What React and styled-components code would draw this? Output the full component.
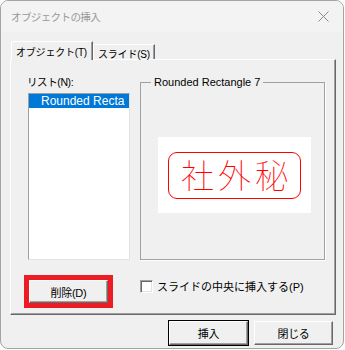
import React from "react";
import styled, { createGlobalStyle } from "styled-components";

const Global = createGlobalStyle`
  html, body {
    margin: 0;
    padding: 0;
    background: #ffffff;
  }
  body {
    font-family: "Liberation Sans", "Noto Sans CJK JP", sans-serif;
    font-size: 11px;
    color: #000;
  }
`;

const Window = styled.div`
  width: 344px;
  height: 349px;
  box-sizing: border-box;
  border: 1px solid #a4a4a4;
  border-radius: 8px;
  background: #f0f0f0;
  overflow: hidden;
  display: flex;
  flex-direction: column;
`;

const TitleBar = styled.div`
  height: 31px;
  flex: none;
  background: #f3f3f3;
  display: flex;
  align-items: center;
  justify-content: space-between;
  padding: 0 10px 0 10px;
  color: #9a9a9a;
  font-size: 10.5px;
  letter-spacing: -0.6px;
`;

const Close = styled.svg`
  width: 11px;
  height: 11px;
  margin-right: 4px;
`;

const Body = styled.div`
  padding: 9px 9px 0 9px;
  display: flex;
  flex-direction: column;
`;

const TabRow = styled.div`
  display: flex;
  align-items: flex-end;
  height: 18px;
  padding-left: 1px;
  position: relative;
  z-index: 1;
`;

const Tab = styled.div`
  box-sizing: border-box;
  height: ${(p) => (p.$active ? "19px" : "15px")};
  margin-bottom: ${(p) => (p.$active ? "-1px" : "0")};
  padding: ${(p) => (p.$active ? "2px 0 0 4px" : "1px 0 0 4px")};
  width: ${(p) => p.$w}px;
  background: #f0f0f0;
  border-top: 1px solid #ffffff;
  border-left: 1px solid #ffffff;
  border-right: 1px solid #696969;
  border-top-left-radius: 2px;
  box-shadow: inset -1px 0 #a0a0a0;
  white-space: nowrap;
  font-size: 10px;
  letter-spacing: -0.2px;
`;

const Panel = styled.div`
  box-sizing: border-box;
  height: 256px;
  width: 326px;
  border-top: 1px solid #ffffff;
  border-left: 1px solid #ffffff;
  border-right: 1px solid #696969;
  border-bottom: 1px solid #696969;
  box-shadow: inset -1px -1px #a0a0a0;
  padding: 16px 0 0 16px;
  display: flex;
  flex-direction: column;
`;

const TopRow = styled.div`
  display: flex;
  gap: 10px;
`;

const ListColumn = styled.div`
  display: flex;
  flex-direction: column;
  width: 103px;
`;

const Label = styled.div`
  height: 13px;
  line-height: 13px;
  margin-bottom: 4px;
  font-size: 10.5px;
  letter-spacing: -0.4px;
`;

const ListBox = styled.div`
  box-sizing: border-box;
  margin-left: 1px;
  width: 102px;
  height: 167px;
  background: #ffffff;
  border-top: 1px solid #a0a0a0;
  border-left: 1px solid #a0a0a0;
  border-right: 1px solid #e3e3e3;
  border-bottom: 1px solid #e3e3e3;
  overflow: hidden;
`;

const ListItem = styled.div`
  height: 14px;
  line-height: 14px;
  padding-left: 12px;
  white-space: nowrap;
  overflow: hidden;
  background: ${(p) => (p.$selected ? "#0078d7" : "transparent")};
  color: ${(p) => (p.$selected ? "#ffffff" : "#000000")};
  font-size: 12px;
`;

const Group = styled.fieldset`
  margin: 0;
  padding: 0;
  width: 185px;
  box-sizing: border-box;
  border: 1px solid #a0a0a0;
  box-shadow: 1px 1px #ffffff;
  min-width: 0;
`;

const Legend = styled.legend`
  margin-left: 10px;
  padding: 0 3px;
  line-height: 13px;
  font-size: 11px;
`;

const PreviewArea = styled.div`
  height: 169px;
  box-sizing: border-box;
  padding: 48px 0 0 17px;
`;

const Preview = styled.div`
  width: 153px;
  height: 76px;
  background: #ffffff;
  display: flex;
  align-items: center;
  justify-content: center;
`;

const Stamp = styled.div`
  box-sizing: border-box;
  width: 133px;
  height: 47px;
  border: 1px solid #ff0000;
  border-radius: 9px;
  display: flex;
  align-items: center;
  justify-content: center;
  color: #ff0000;
  font-family: "Noto Sans CJK JP", sans-serif;
  font-weight: 100;
  font-size: 33px;
  letter-spacing: 4px;
  padding: 0 0 1px 4px;
  line-height: 1;
`;

const BottomRow = styled.div`
  display: flex;
  align-items: flex-start;
  margin: 15px 0 0 -3px;
`;

const Highlight = styled.div`
  border: 5px solid #ed1c24;
  display: flex;
`;

const Button = styled.button`
  box-sizing: border-box;
  width: 79px;
  height: ${(p) => p.$h || 23}px;
  margin: 0;
  padding: 0;
  font: inherit;
  font-size: 11px;
  letter-spacing: -0.3px;
  color: #000;
  background: #f0f0f0;
  border-top: 1px solid #ffffff;
  border-left: 1px solid #ffffff;
  border-right: 1px solid #696969;
  border-bottom: 1px solid #696969;
  box-shadow: inset -1px -1px #a0a0a0;
  outline: ${(p) => (p.$default ? "1px solid #000" : "none")};
  outline-offset: 0;
`;

const CheckRow = styled.label`
  display: flex;
  align-items: center;
  gap: 4px;
  margin: 3px 0 0 27px;
  letter-spacing: 0;
`;

const CheckBox = styled.span`
  box-sizing: border-box;
  width: 13px;
  height: 13px;
  background: #ffffff;
  border-top: 1px solid #a0a0a0;
  border-left: 1px solid #a0a0a0;
  border-right: 1px solid #ffffff;
  border-bottom: 1px solid #ffffff;
  box-shadow: inset 1px 1px #696969, inset -1px -1px #e3e3e3;
`;

const Footer = styled.div`
  display: flex;
  justify-content: flex-end;
  gap: 6px;
  padding: 6px 1px 0 0;
`;

export default function App() {
  return (
    <>
      <Global />
      <Window>
        <TitleBar>
          <span>オブジェクトの挿入</span>
          <Close viewBox="0 0 11 11">
            <path d="M0.5 0.5 L10.5 10.5 M10.5 0.5 L0.5 10.5" stroke="#8a8a8a" strokeWidth="1" fill="none" />
          </Close>
        </TitleBar>
        <Body>
          <TabRow>
            <Tab $active $w={82}>オブジェクト(T)</Tab>
            <Tab $w={62}>スライド(S)</Tab>
          </TabRow>
          <Panel>
            <TopRow>
              <ListColumn>
                <Label>リスト(N):</Label>
                <ListBox>
                  <ListItem $selected>Rounded Recta</ListItem>
                </ListBox>
              </ListColumn>
              <Group>
                <Legend>Rounded Rectangle 7</Legend>
                <PreviewArea>
                  <Preview>
                    <Stamp>社外秘</Stamp>
                  </Preview>
                </PreviewArea>
              </Group>
            </TopRow>
            <BottomRow>
              <Highlight>
                <Button>削除(D)</Button>
              </Highlight>
              <CheckRow>
                <CheckBox />
                <span>スライドの中央に挿入する(P)</span>
              </CheckRow>
            </BottomRow>
          </Panel>
          <Footer>
            <Button $default $h={24}>挿入</Button>
            <Button $h={24}>閉じる</Button>
          </Footer>
        </Body>
      </Window>
    </>
  );
}
